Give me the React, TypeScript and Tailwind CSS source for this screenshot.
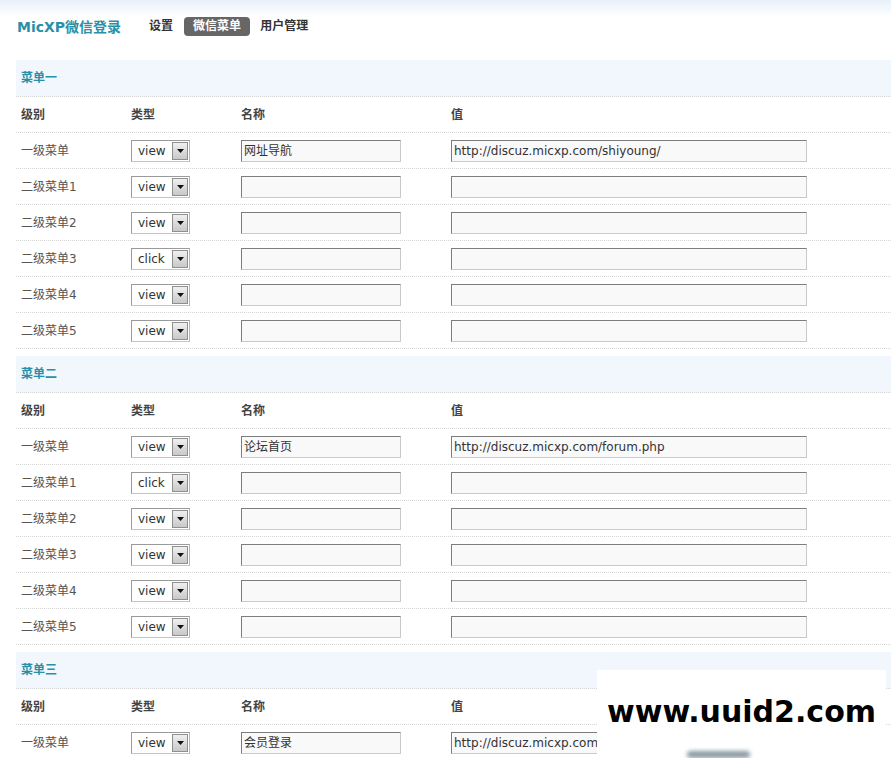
import React from 'react';

type Row = { level: string; type: string; name?: string; value?: string };
type Section = { title: string; rows: Row[] };

const sections: Section[] = [
  {
    title: '菜单一',
    rows: [
      { level: '一级菜单', type: 'view', name: '网址导航', value: 'http://discuz.micxp.com/shiyoung/' },
      { level: '二级菜单1', type: 'view' },
      { level: '二级菜单2', type: 'view' },
      { level: '二级菜单3', type: 'click' },
      { level: '二级菜单4', type: 'view' },
      { level: '二级菜单5', type: 'view' },
    ],
  },
  {
    title: '菜单二',
    rows: [
      { level: '一级菜单', type: 'view', name: '论坛首页', value: 'http://discuz.micxp.com/forum.php' },
      { level: '二级菜单1', type: 'click' },
      { level: '二级菜单2', type: 'view' },
      { level: '二级菜单3', type: 'view' },
      { level: '二级菜单4', type: 'view' },
      { level: '二级菜单5', type: 'view' },
    ],
  },
  {
    title: '菜单三',
    rows: [{ level: '一级菜单', type: 'view', name: '会员登录', value: 'http://discuz.micxp.com/member.php' }],
  },
];

const FakeSelect: React.FC<{ value: string }> = ({ value }) => (
  <div className="flex h-[22px] w-[59px] items-stretch border border-[#9a9a9a] border-r-[#b5b5b5] border-b-[#c4c4c4] bg-white">
    <span className="flex-1 pl-[6px] leading-[20px] text-[#333]">{value}</span>
    <span className="my-px mr-px flex w-[16px] items-center justify-center border border-[#8f8f8f] bg-gradient-to-b from-[#f0f0f0] to-[#c8c8c8]">
      <svg width="7" height="4" viewBox="0 0 7 4">
        <path d="M0 0h7L3.5 4z" fill="#111" />
      </svg>
    </span>
  </div>
);

const FakeInput: React.FC<{ value?: string; width: string }> = ({ value, width }) => (
  <div
    className={`${width} h-[22px] border border-[#7d7d7d] border-r-[#c9c9c9] border-b-[#c9c9c9] bg-[#f9f9f9] pl-[2px] leading-[20px] text-[#333]`}
  >
    {value}
  </div>
);

const MenuSection: React.FC<{ section: Section }> = ({ section }) => (
  <div className="mb-[7px]">
    <div className="flex h-[37px] items-center border-b border-dotted border-[#d6d6d6] bg-[#f1f7fd] pl-[5px] font-bold text-[#2a8fa8]">
      {section.title}
    </div>
    <div className="flex h-[36px] items-center border-b border-dotted border-[#d6d6d6] pl-[5px] font-bold text-[#444]">
      <div className="w-[110px]">级别</div>
      <div className="w-[110px]">类型</div>
      <div className="w-[210px]">名称</div>
      <div>值</div>
    </div>
    {section.rows.map((row) => (
      <div key={row.level} className="flex h-[36px] items-center border-b border-dotted border-[#d6d6d6] pl-[5px] text-[#555]">
        <div className="w-[110px]">{row.level}</div>
        <div className="w-[110px]">
          <FakeSelect value={row.type} />
        </div>
        <div className="w-[210px]">
          <FakeInput value={row.name} width="w-[160px]" />
        </div>
        <div>
          <FakeInput value={row.value} width="w-[356px]" />
        </div>
      </div>
    ))}
  </div>
);

export default function App() {
  return (
    <div className="relative h-[758px] overflow-hidden bg-white font-['DejaVu_Sans','Noto_Sans_CJK_SC',sans-serif] text-[12px]">
      <div className="flex h-[60px] items-start bg-[linear-gradient(#e7f0f9,#ffffff_16px)] pl-[17px] pt-[17px]">
        <div className="mr-[28px] text-[14px] font-bold leading-[20px] text-[#2a8fa8]">MicXP微信登录</div>
        <nav className="flex items-center font-bold leading-[19px] text-[#333]">
          <span className="mr-[11px]">设置</span>
          <span className="mr-[10px] rounded-[4px] bg-[#666] px-[9px] text-white">微信菜单</span>
          <span>用户管理</span>
        </nav>
      </div>
      <div className="ml-[16px]">
        {sections.map((s) => (
          <MenuSection key={s.title} section={s} />
        ))}
      </div>
      <div className="absolute left-[597px] top-[670px] flex h-[88px] w-[289px] flex-col items-center bg-white">
        <div className="mt-[24px] text-[30px] font-bold leading-[36px] text-black">www.uuid2.com</div>
        <div className="mt-auto ml-[90px] h-[7px] w-[63px] self-start rounded-full bg-[#8a9aa2] blur-[2px]" />
      </div>
    </div>
  );
}
